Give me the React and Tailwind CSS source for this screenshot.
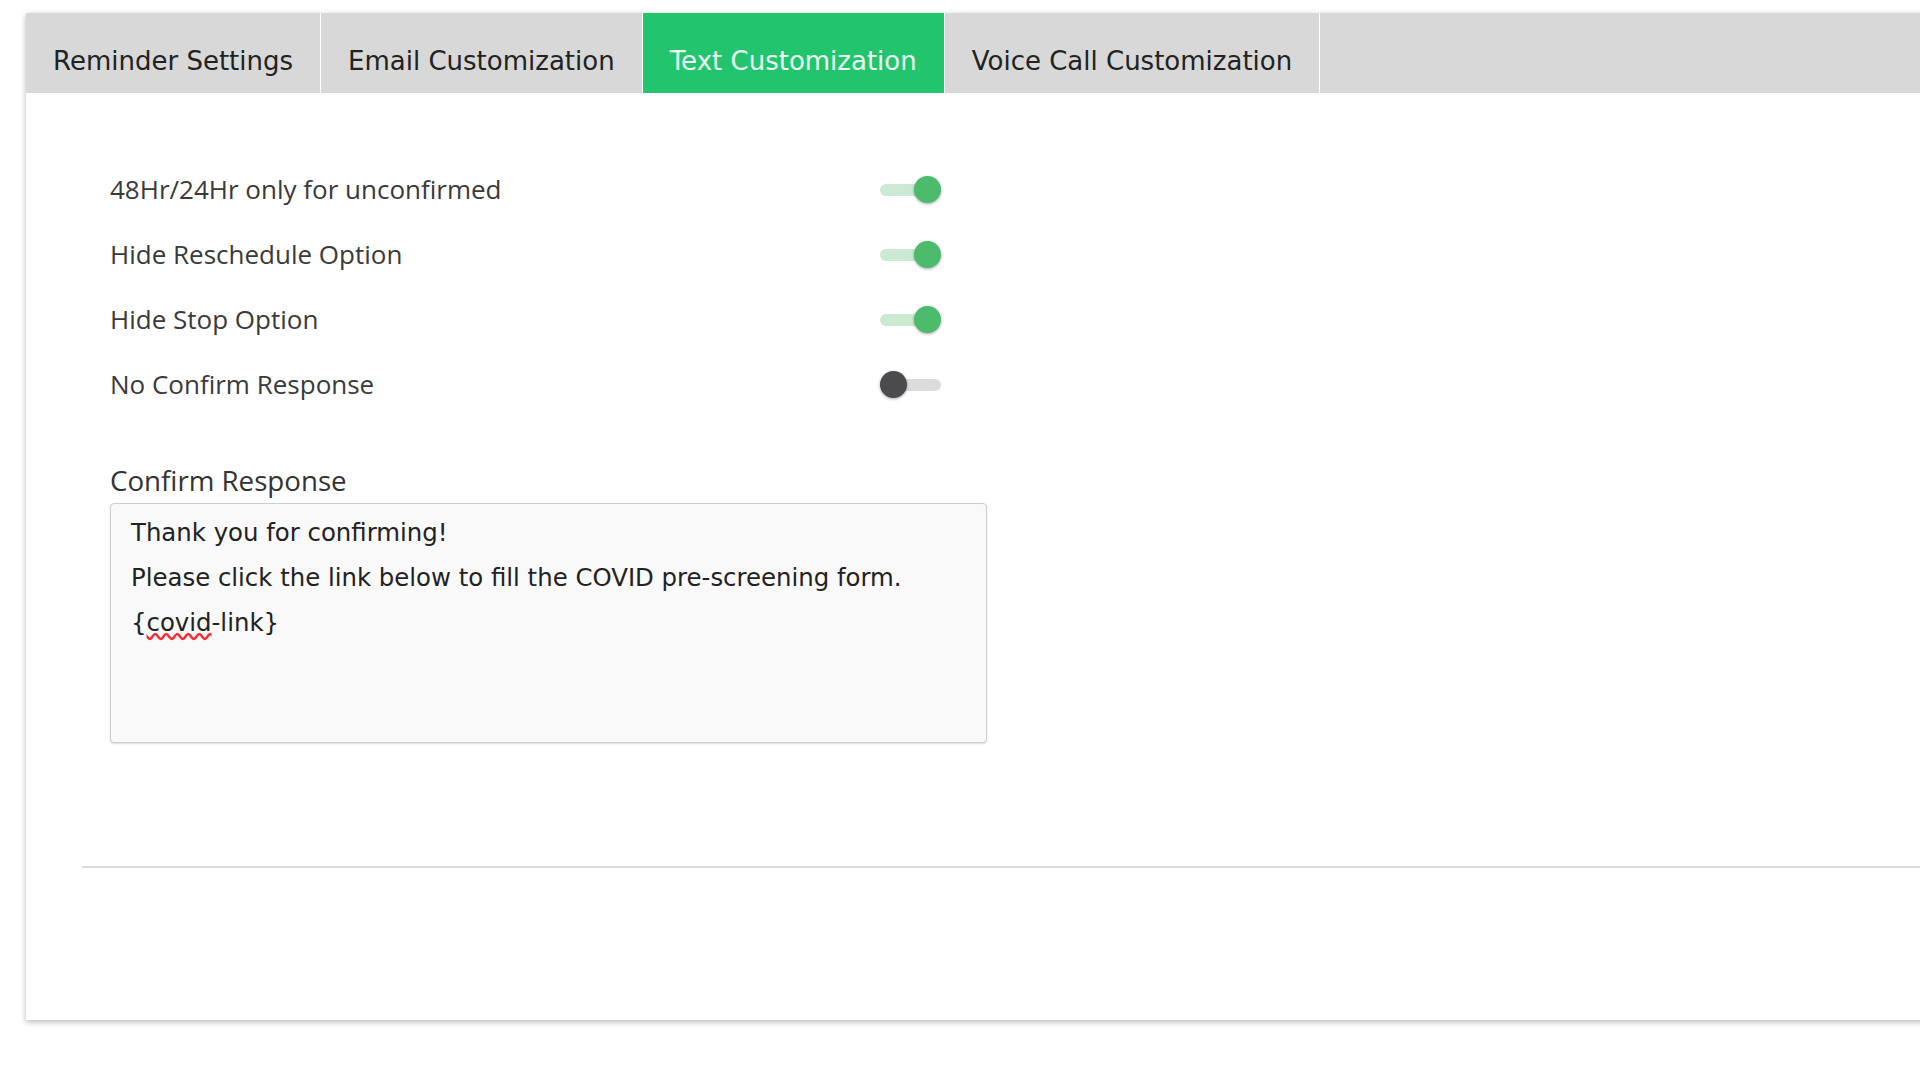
import { useState } from 'react'

const tabs = ['Reminder Settings', 'Email Customization', 'Text Customization', 'Voice Call Customization']

const initialToggles = [
  { key: 'unconfirmed', label: '48Hr/24Hr only for unconfirmed', on: true },
  { key: 'reschedule', label: 'Hide Reschedule Option', on: true },
  { key: 'stop', label: 'Hide Stop Option', on: true },
  { key: 'noConfirm', label: 'No Confirm Response', on: false },
]

function Toggle({ on, onChange }) {
  return (
    <button type="button" onClick={onChange} className="relative h-[27px] w-[61px] shrink-0">
      <span
        className={`absolute left-0 right-0 top-[8px] h-[12px] rounded-full ${on ? 'bg-[#cbe9d3]' : 'bg-[#dcdcdc]'}`}
      />
      <span
        className={`absolute top-0 h-[27px] w-[27px] rounded-full shadow-[0_1px_3px_rgba(0,0,0,0.35)] ${
          on ? 'right-0 bg-[#4cbb6c]' : 'left-0 bg-[#4b4b4d]'
        }`}
      />
    </button>
  )
}

export default function App() {
  const [active, setActive] = useState(2)
  const [toggles, setToggles] = useState(initialToggles)

  return (
    <div className="h-[1080px] w-[1920px] overflow-hidden bg-white pl-[26px] pt-[13px]">
      <div className="flex h-[1007px] w-[1960px] flex-col bg-white shadow-[0_2px_6px_rgba(0,0,0,0.28)]">
        <div className="flex h-[80px] bg-[#d8d8d8] font-['DejaVu_Sans',sans-serif] text-[26px]">
          {tabs.map((tab, i) => (
            <button
              key={tab}
              type="button"
              onClick={() => setActive(i)}
              className={`flex h-full items-start whitespace-nowrap border-r border-white px-[27px] pt-[29px] leading-[39px] ${
                active === i ? 'bg-[#22c46d] text-[#eefff4]' : 'text-[#222]'
              }`}
            >
              {tab}
            </button>
          ))}
        </div>

        <div className="pl-[84px] pt-[64px] font-['Open_Sans',sans-serif] text-[#3a3a3a]">
          {toggles.map((t) => (
            <div key={t.key} className="flex h-[65px] w-[831px] items-center justify-between">
              <span className="text-[26px]">{t.label}</span>
              <Toggle
                on={t.on}
                onChange={() =>
                  setToggles((prev) => prev.map((p) => (p.key === t.key ? { ...p, on: !p.on } : p)))
                }
              />
            </div>
          ))}

          <p className="mt-[45px] text-[27.7px] leading-[36px] text-[#333]">Confirm Response</p>
          <div className="mt-[5px] h-[240px] w-[877px] rounded-[4px] border border-[#cfcfcf] bg-[#f9f9f9] pl-[20px] pt-[6px] font-['DejaVu_Sans',sans-serif] text-[24.4px] leading-[45px] text-[#222] shadow-[0_1px_2px_rgba(0,0,0,0.15)]">
            <div>Thank you for confirming!</div>
            <div>Please click the link below to fill the COVID pre-screening form.</div>
            <div>
              {'{'}
              <span className="underline decoration-red-500 decoration-wavy">covid</span>
              -link{'}'}
            </div>
          </div>
        </div>

        <div className="ml-[56px] mt-[123px] h-[2px] bg-[#dddddd]" />
      </div>
    </div>
  )
}
